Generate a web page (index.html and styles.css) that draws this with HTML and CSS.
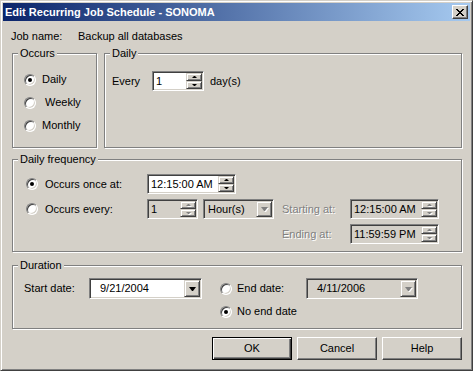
FILE: index.html
```html
<!DOCTYPE HTML>
<html>
    <head>
        <meta charset='utf-8'/>
        <title>Edit Recurring Job Schedule</title>
        <link rel="stylesheet" href="styles.css">
    </head>
    <body>
        <div class="window">
            <div class="titlebar">
                <span class="title">Edit Recurring Job Schedule - SONOMA</span>
                <span class="capbtn">
                    <svg width="8" height="7" viewBox="0 0 8 7" shape-rendering="crispEdges">
                        <path d="M0 0h2v1h-2z M6 0h2v1h-2z M1 1h2v1h-2z M5 1h2v1h-2z M2 2h4v1h-4z M3 3h2v1h-2z M2 4h4v1h-4z M1 5h2v1h-2z M5 5h2v1h-2z M0 6h2v1h-2z M6 6h2v1h-2z" fill="#000"/>
                    </svg>
                </span>
            </div>
            <div class="client">
                <div class="jobrow">
                    <span class="joblabel">Job name:</span>
                    <span>Backup all databases</span>
                </div>

                <div class="toprow">
                    <div class="group occurs">
                        <span class="gtitle">Occurs</span>
                        <div class="radios">
                            <label class="radio"><span class="rb on"></span><span>Daily</span></label>
                            <label class="radio"><span class="rb"></span><span class="pad">Weekly</span></label>
                            <label class="radio"><span class="rb"></span><span>Monthly</span></label>
                        </div>
                    </div>
                    <div class="group daily">
                        <span class="gtitle">Daily</span>
                        <div class="everyrow">
                            <span class="every">Every</span>
                            <span class="field w52">
                                <span class="val">1</span>
                                <span class="spin">
                                    <span class="sb"><i class="up"></i></span>
                                    <span class="sb"><i class="down"></i></span>
                                </span>
                            </span>
                            <span class="days">day(s)</span>
                        </div>
                    </div>
                </div>

                <div class="group freq">
                    <span class="gtitle">Daily frequency</span>
                    <div class="freqgrid">
                        <label class="radio"><span class="rb on"></span><span>Occurs once at:</span></label>
                        <span class="field w89 span2">
                            <span class="val">12:15:00 AM</span>
                            <span class="spin">
                                <span class="sb"><i class="up"></i></span>
                                <span class="sb"><i class="down"></i></span>
                            </span>
                        </span>
                        <span></span>
                        <span></span>

                        <label class="radio"><span class="rb"></span><span>Occurs every:</span></label>
                        <span class="field off w51">
                            <span class="val">1</span>
                            <span class="spin">
                                <span class="sb"><i class="up dis"></i></span>
                                <span class="sb"><i class="down dis"></i></span>
                            </span>
                        </span>
                        <span class="field off combo w71">
                            <span class="val pad2">Hour(s)</span>
                            <span class="drop"><i class="arrow dis"></i></span>
                        </span>
                        <span class="dislabel">Starting at:</span>
                        <span class="field off w89">
                            <span class="val">12:15:00 AM</span>
                            <span class="spin">
                                <span class="sb"><i class="up dis"></i></span>
                                <span class="sb"><i class="down dis"></i></span>
                            </span>
                        </span>

                        <span></span>
                        <span></span>
                        <span></span>
                        <span class="dislabel">Ending at:</span>
                        <span class="field off w89">
                            <span class="val">11:59:59 PM</span>
                            <span class="spin">
                                <span class="sb"><i class="up dis"></i></span>
                                <span class="sb"><i class="down dis"></i></span>
                            </span>
                        </span>
                    </div>
                </div>

                <div class="group duration">
                    <span class="gtitle">Duration</span>
                    <div class="durrow">
                        <span class="startlabel">Start date:</span>
                        <span class="field combo tall w113">
                            <span class="val date">9/21/2004</span>
                            <span class="drop"><i class="arrow"></i></span>
                        </span>
                        <div class="endcol">
                            <div class="endrow">
                                <label class="radio"><span class="rb"></span><span class="endlabel">End date:</span></label>
                                <span class="field off combo tall w112">
                                    <span class="val date">4/11/2006</span>
                                    <span class="drop"><i class="arrow dis"></i></span>
                                </span>
                            </div>
                            <label class="radio"><span class="rb on"></span><span>No end date</span></label>
                        </div>
                    </div>
                </div>

                <div class="buttons">
                    <span class="btn default">OK</span>
                    <span class="btn">Cancel</span>
                    <span class="btn">Help</span>
                </div>
            </div>
        </div>
    </body>
</html>
```

FILE: styles.css
```css
body{
    margin: 0;
    background: #d4d0c8;
    font-family: "Liberation Sans", Arial, sans-serif;
    font-size: 11px;
    line-height: 13px;
    color: #000;
}
.window{
    width: 473px;
    height: 371px;
    box-sizing: border-box;
    border: 1px solid;
    border-color: #d4d0c8 #404040 #404040 #d4d0c8;
    box-shadow: inset 1px 1px 0 #fff, inset -1px -1px 0 #808080;
    padding: 2px;
    background: #d4d0c8;
}
.titlebar{
    height: 18px;
    display: flex;
    align-items: center;
    padding: 0 2px;
    background: linear-gradient(to right, #0a246a, #a6caf0);
}
.title{
    flex: 1;
    color: #fff;
    font-weight: bold;
}
.capbtn{
    width: 16px;
    height: 14px;
    box-sizing: border-box;
    display: flex;
    align-items: center;
    justify-content: center;
    background: #d4d0c8;
    border: 1px solid;
    border-color: #fff #404040 #404040 #fff;
    box-shadow: inset -1px -1px 0 #808080;
}
.capbtn svg{
    display: block;
    margin-left: -1px;
}
.client{
    display: flex;
    flex-direction: column;
    padding: 0 8px 0 9px;
}
.jobrow{
    display: flex;
    padding: 9px 0 0 0;
    margin-left: -1px;
}
.joblabel{
    width: 67px;
}

/* group boxes */
.group{
    display: flex;
    flex-direction: column;
    align-items: flex-start;
    box-sizing: border-box;
    border: 1px solid #808080;
    box-shadow: inset 1px 1px 0 #fff, 1px 1px 0 #fff;
}
.gtitle{
    margin: -7px 0 0 5px;
    padding: 0 2px;
    background: #d4d0c8;
    line-height: 13px;
}
.toprow{
    display: flex;
    gap: 7px;
    margin-top: 10px;
}
.occurs{
    width: 85px;
    height: 95px;
}
.daily{
    width: 358px;
    height: 95px;
}
.radios{
    display: flex;
    flex-direction: column;
    gap: 10px;
    margin: 13px 0 0 11px;
}
.radio{
    display: flex;
    align-items: center;
    gap: 6px;
    height: 13px;
}
.rb{
    width: 12px;
    height: 12px;
    box-sizing: border-box;
    border-radius: 50%;
    border: 1px solid;
    border-color: #808080 #fff #fff #808080;
    box-shadow: inset 1px 1px 0 #404040, inset -1px -1px 0 #d4d0c8;
    background: #fff;
    display: flex;
    align-items: center;
    justify-content: center;
    flex: none;
}
.rb.on::after{
    content: "";
    width: 4px;
    height: 4px;
    border-radius: 50%;
    background: #000;
}
.pad{
    padding-left: 3px;
}
.everyrow{
    display: flex;
    align-items: center;
    margin: 11px 0 0 7px;
}
.every{
    width: 40px;
}
.days{
    margin-left: 6px;
}

/* edit fields */
.field{
    display: flex;
    height: 20px;
    box-sizing: border-box;
    border: 1px solid;
    border-color: #808080 #fff #fff #808080;
    box-shadow: inset 1px 1px 0 #404040, inset -1px -1px 0 #d4d0c8;
    padding: 1px;
    background: #fff;
}
.field.off{
    background: #d4d0c8;
}
.field.tall{
    height: 21px;
}
.w51{ width: 51px; }
.w52{ width: 52px; }
.w71{ width: 71px; }
.w89{ width: 89px; }
.w112{ width: 112px; }
.w113{ width: 113px; }
.val{
    flex: 1;
    line-height: 16px;
    padding-left: 2px;
    white-space: nowrap;
    overflow: hidden;
}
.tall .val{
    line-height: 17px;
}
.val.pad2{
    padding-left: 3px;
}
.val.date{
    padding-left: 9px;
}
.spin{
    display: flex;
    flex-direction: column;
    width: 16px;
}
.sb, .drop{
    flex: 1;
    box-sizing: border-box;
    display: flex;
    align-items: center;
    justify-content: center;
    background: #d4d0c8;
    border: 1px solid;
    border-color: #d4d0c8 #404040 #404040 #d4d0c8;
    box-shadow: inset 1px 1px 0 #fff, inset -1px -1px 0 #808080;
}
.drop{
    flex: none;
    width: 16px;
}
.up, .down, .arrow{
    display: block;
    width: 1px;
    height: 0;
    border-left: 2px solid transparent;
    border-right: 2px solid transparent;
}
.up{
    border-bottom: 2px solid #000;
}
.down{
    border-top: 2px solid #000;
}
.arrow{
    width: 1px;
    border-left-width: 3px;
    border-right-width: 3px;
    border-top: 4px solid #000;
}
.up.dis{
    border-bottom-color: #808080;
    filter: drop-shadow(1px 1px 0 #fff);
}
.down.dis, .arrow.dis{
    border-top-color: #808080;
    filter: drop-shadow(1px 1px 0 #fff);
}
.dislabel{
    color: #808080;
    text-shadow: 1px 1px 0 #fff;
}

/* daily frequency */
.freq{
    height: 93px;
    margin-top: 11px;
}
.freqgrid{
    display: grid;
    grid-template-columns: 121px 56px 79px 68px 89px;
    grid-template-rows: 20px 20px 20px;
    row-gap: 5px;
    align-items: center;
    margin: 8px 0 0 13px;
}
.freqgrid .radio{
    gap: 7px;
}
.span2{
    grid-column: span 2;
}

/* duration */
.duration{
    height: 64px;
    margin-top: 13px;
}
.durrow{
    display: flex;
    align-items: flex-start;
    margin: 6px 0 0 11px;
}
.startlabel{
    width: 65px;
    line-height: 21px;
}
.endcol{
    display: flex;
    flex-direction: column;
    gap: 6px;
    margin-left: 18px;
}
.endrow{
    display: flex;
    align-items: center;
}
.duration .radio{
    gap: 5px;
}
.endlabel{
    width: 69px;
}

/* buttons */
.buttons{
    display: flex;
    justify-content: flex-end;
    gap: 5px;
    margin-top: 8px;
}
.btn{
    width: 80px;
    height: 23px;
    box-sizing: border-box;
    display: flex;
    align-items: center;
    justify-content: center;
    background: #d4d0c8;
    border: 1px solid;
    border-color: #fff #404040 #404040 #fff;
    box-shadow: inset -1px -1px 0 #808080;
}
.btn.default{
    border-color: #000;
    box-shadow: inset 1px 1px 0 #fff, inset -1px -1px 0 #404040, inset -2px -2px 0 #808080;
}
```
